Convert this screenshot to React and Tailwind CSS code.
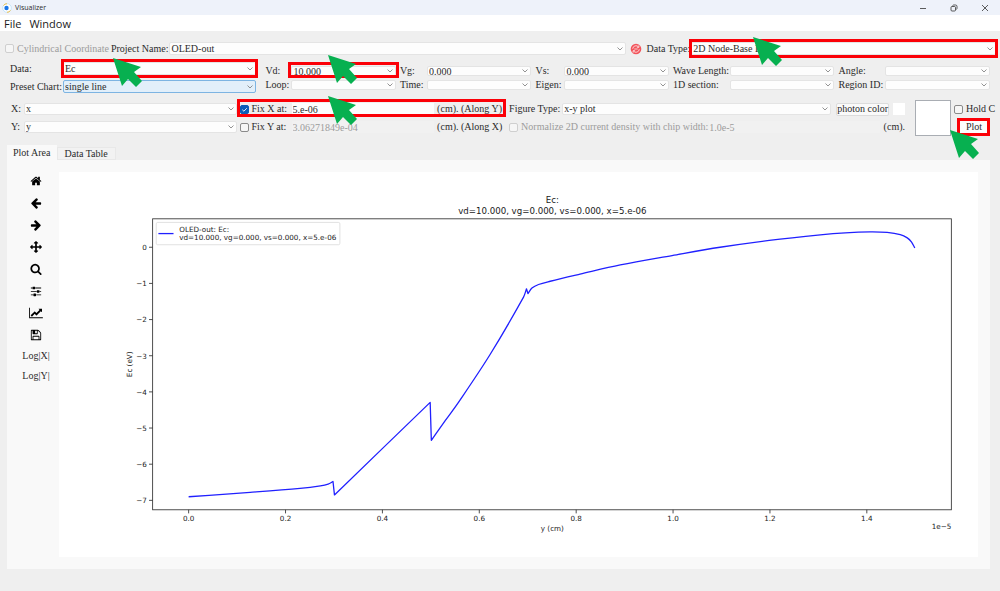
import clsx from "clsx";
import { useState } from "react";

const BIAS_FIELDS = [
  ["Vd:", "10.000"],
  ["Vg:", "0.000"],
  ["Vs:", "0.000"],
  ["Wave Length:", ""],
  ["Angle:", ""],
  ["Loop:", ""],
  ["Time:", ""],
  ["Eigen:", ""],
  ["1D section:", ""],
  ["Region ID:", ""],
];

// Font Awesome 4 glyphs used by the plot toolbar
const TOOLS = [
  {
    name: "Home",
    d: "M1472 992v480q0 26-19 45t-45 19h-384v-384h-256v384h-384q-26 0-45-19t-19-45v-480q0-1 .5-3t.5-3l575-474 575 474q1 2 1 6zm223-69l-62 74q-8 9-21 11h-3q-13 0-21-7l-692-577-692 577q-12 8-24 7-13-2-21-11l-62-74q-8-10-7-23.5t11-21.5l719-599q32-26 76-26t76 26l244 204v-195q0-14 9-23t23-9h192q14 0 23 9t9 23v408l219 182q10 8 11 21.5t-7 23.5z",
  },
  {
    name: "Back",
    d: "M1664 896v128q0 53-32.5 90.5t-84.5 37.5h-704l293 294q38 36 38 90t-38 90l-75 76q-37 37-90 37-52 0-91-37l-651-652q-37-37-37-90 0-52 37-91l651-650q38-38 91-38 52 0 90 38l75 74q38 38 38 91t-38 91l-293 293h704q52 0 84.5 37.5t32.5 90.5z",
  },
  {
    name: "Forward",
    flip: true,
    d: "M1664 896v128q0 53-32.5 90.5t-84.5 37.5h-704l293 294q38 36 38 90t-38 90l-75 76q-37 37-90 37-52 0-91-37l-651-652q-37-37-37-90 0-52 37-91l651-650q38-38 91-38 52 0 90 38l75 74q38 38 38 91t-38 91l-293 293h704q52 0 84.5 37.5t32.5 90.5z",
  },
  {
    name: "Pan",
    d: "M1792 896q0 26-19 45l-256 256q-19 19-45 19t-45-19-19-45v-128h-384v384h128q26 0 45 19t19 45-19 45l-256 256q-19 19-45 19t-45-19l-256-256q-19-19-19-45t19-45 45-19h128v-384h-384v128q0 26-19 45t-45 19-45-19l-256-256q-19-19-19-45t19-45l256-256q19-19 45-19t45 19 19 45v128h384v-384h-128q-26 0-45-19t-19-45 19-45l256-256q19-19 45-19t45 19l256 256q19 19 19 45t-19 45-45 19h-128v384h384v-128q0-26 19-45t45-19 45 19l256 256q19 19 19 45z",
  },
  {
    name: "Zoom",
    d: "M1216 832q0-185-131.5-316.5t-316.5-131.5-316.5 131.5-131.5 316.5 131.5 316.5 316.5 131.5 316.5-131.5 131.5-316.5zm512 832q0 52-38 90t-90 38q-54 0-90-38l-343-342q-179 124-399 124-143 0-273.5-55.5t-225-150-150-225-55.5-273.5 55.5-273.5 150-225 225-150 273.5-55.5 273.5 55.5 225 150 150 225 55.5 273.5q0 220-124 399l343 343q37 37 37 90z",
  },
  {
    name: "Configure subplots",
    d: "M480 1408v128h-352v-128h352zm352-128q26 0 45 19t19 45v256q0 26-19 45t-45 19h-256q-26 0-45-19t-19-45v-256q0-26 19-45t45-19h256zm160-384v128h-864v-128h864zm-640-512v128h-224v-128h224zm1312 1024v128h-736v-128h736zm-960-1152q26 0 45 19t19 45v256q0 26-19 45t-45 19h-256q-26 0-45-19t-19-45v-256q0-26 19-45t45-19h256zm640 512q26 0 45 19t19 45v256q0 26-19 45t-45 19h-256q-26 0-45-19t-19-45v-256q0-26 19-45t45-19h256zm320 128v128h-224v-128h224zm0-512v128h-864v-128h864z",
  },
  {
    name: "Edit axes",
    wide: true,
    d: "M2048 1536v128h-2048v-1536h128v1408h1920zm-128-1248v435q0 21-19.5 29.5t-35.5-7.5l-121-121-633 633q-10 10-23 10t-23-10l-233-233-416 416-192-192 585-585q10-10 23-10t23 10l233 233 464-464-121-121q-16-16-7.5-35.5t29.5-19.5h435q14 0 23 9t9 23z",
  },
  {
    name: "Save",
    d: "M512 1536h768v-384h-768v384zm896 0h128v-896q0-14-10-38.5t-20-34.5l-281-281q-10-10-34-20t-39-10v416q0 40-28 68t-68 28h-576q-40 0-68-28t-28-68v-416h-128v1280h128v-416q0-40 28-68t68-28h832q40 0 68 28t28 68v416zm-384-928v-320q0-13-9.5-22.5t-22.5-9.5h-192q-13 0-22.5 9.5t-9.5 22.5v320q0 13 9.5 22.5t22.5 9.5h192q13 0 22.5-9.5t9.5-22.5zm640 32v928q0 40-28 68t-68 28h-1344q-40 0-68-28t-28-68v-1344q0-40 28-68t68-28h928q40 0 88 20t76 48l280 280q28 28 48 76t20 88z",
  },
];

// Conduction band per layer: [y (1e-5 cm), Ec (eV)]
const LAYERS = [
  [[0, -6.9], [0.127, -6.78], [0.23, -6.67], [0.272, -6.6], [0.288, -6.55], [0.298, -6.48]],
  [[0.301, -6.85], [0.4986, -4.29]],
  [[0.501, -5.34], [0.53, -4.79], [0.557, -4.29], [0.6226, -2.96], [0.6913, -1.38], [0.6975, -1.15]],
  [
    [0.7004, -1.28], [0.7087, -1.13], [0.7223, -1.03], [0.7465, -0.94], [0.808, -0.745],
    [0.891, -0.49], [0.998, -0.23], [1.097, 0], [1.1985, 0.19], [1.304, 0.345], [1.3555, 0.4],
    [1.407, 0.425], [1.442, 0.41], [1.469, 0.35], [1.4835, 0.26], [1.492, 0.15], [1.499, -0.02],
  ],
];

const sx = (v) => 180 + v * 672.6;
const sy = (v) => 105.5 - v * 50.2;

// Smooth curve inside each layer, straight jump between layers
function bandPath() {
  let d = "";
  LAYERS.forEach((layer) => {
    const p = layer.map(([x, y]) => [sx(x), sy(y)]);
    d += `${d ? "L" : "M"}${p[0][0]} ${p[0][1]}`;
    for (let i = 0; i < p.length - 1; i++) {
      const a = p[i - 1] || p[i];
      const b = p[i];
      const c = p[i + 1];
      const e = p[i + 2] || c;
      // keep the control points inside the segment when spacing is uneven
      const k = (c[0] - b[0]) / 3;
      const m1 = (c[1] - a[1]) / (c[0] - a[0]);
      const m2 = (e[1] - b[1]) / (e[0] - b[0]);
      d += `C${b[0] + k} ${b[1] + m1 * k} ${c[0] - k} ${c[1] - m2 * k} ${c[0]} ${c[1]}`;
    }
  });
  return d;
}

function Highlight({ className }) {
  return <span className={clsx("pointer-events-none absolute border-[3px] border-[#fb0007]", className)} />;
}

function Pointer({ className }) {
  return (
    <svg viewBox="0 0 30 30" className={clsx("pointer-events-none absolute z-10 size-[30px]", className)}>
      <path d="M0 0L28 9L21 14L29 23L23 29L15 21L9 28Z" fill="#07b050" />
    </svg>
  );
}

function Select({ id, value, className, selectClass = "border-[#e4e4e4] bg-[#fdfdfd]", children }) {
  return (
    <div className={clsx("relative h-full min-w-0", className)}>
      <select
        id={id}
        defaultValue={value}
        className={clsx("block h-full w-full appearance-none rounded-[2px] border pl-px leading-none outline-none", selectClass)}
      >
        <option>{value}</option>
      </select>
      <svg viewBox="0 0 6 4" className="pointer-events-none absolute inset-y-0 right-[3px] my-auto h-1 w-1.5">
        <path d="M.5 .5L3 3L5.5 .5" fill="none" stroke="#777" strokeWidth=".8" />
      </svg>
      {children}
    </div>
  );
}

function Check({ label, className, ...props }) {
  return (
    <label className={clsx("flex items-center gap-[3px] whitespace-nowrap", className)}>
      <span className="relative size-[9px] shrink-0">
        <input
          type="checkbox"
          className="peer block size-[9px] appearance-none rounded-[2px] border border-[#8a8a8a] bg-[#f6f6f6] checked:border-[#0a5cb8] checked:bg-[#0a5cb8] disabled:border-[#cfcfcf]"
          {...props}
        />
        <svg viewBox="0 0 9 9" className="pointer-events-none absolute inset-0 hidden peer-checked:block">
          <path d="M2.3 4.7L3.9 6.2L6.8 3.2" fill="none" stroke="#fff" strokeWidth=".9" />
        </svg>
      </span>
      {label}
    </label>
  );
}

function Chart() {
  return (
    <svg viewBox="0 1 1276 535" className="block w-full bg-white" fontFamily="DejaVu Sans, sans-serif" fontSize="10" fill="#1a1a1a">
      <g fontSize="12" textAnchor="middle">
        <text x="685" y="44">Ec:</text>
        <text x="685" y="59">vd=10.000, vg=0.000, vs=0.000, x=5.e-06</text>
      </g>
      <rect x="130" y="66" width="1109" height="404" fill="none" stroke="#333" strokeWidth="1.2" />
      {[0, 2, 4, 6, 8, 10, 12, 14].map((t) => (
        <g key={t}>
          <path d={`M${sx(t / 10)} 470v5`} stroke="#333" strokeWidth="1.2" />
          <text x={sx(t / 10)} y="485" textAnchor="middle">{(t / 10).toFixed(1)}</text>
        </g>
      ))}
      {[0, 1, 2, 3, 4, 5, 6, 7].map((t) => (
        <g key={t}>
          <path d={`M130 ${sy(-t)}h-5`} stroke="#333" strokeWidth="1.2" />
          <text x="122" y={sy(-t) + 4} textAnchor="end">{t ? `−${t}` : "0"}</text>
        </g>
      ))}
      <text x="685" y="499" textAnchor="middle">y (cm)</text>
      <text x="1239" y="497" textAnchor="end">1e−5</text>
      <text transform="translate(102 268) rotate(-90)" textAnchor="middle">Ec (eV)</text>
      <path d={bandPath()} fill="none" stroke="#2020ff" strokeWidth="1.8" strokeLinejoin="round" />
      <rect x="135" y="71" width="255" height="31" rx="2" fill="#fff" stroke="#d5d5d5" />
      <path d="M138 86.5h21" stroke="#2020ff" strokeWidth="1.8" />
      <text x="167" y="84">OLED-out: Ec:</text>
      <text x="167" y="95">vd=10.000, vg=0.000, vs=0.000, x=5.e-06</text>
    </svg>
  );
}

export default function App() {
  const [tab, setTab] = useState("Plot Area");

  return (
    <div className="min-h-screen overflow-hidden bg-[#efefef] font-['Liberation_Serif',serif] text-[10px] leading-none text-[#2b2b2b]">
      {/* Title bar */}
      <header className="flex h-[15px] items-center bg-[#eef2fa] pr-[11px] pl-[2px] font-['Open_Sans',sans-serif] text-[7px]">
        <svg viewBox="0 0 10 10" className="mr-[3px] size-[10px]">
          <circle cx="5" cy="5" r="4.3" fill="#fff" stroke="#a8d8f5" strokeWidth=".6" />
          <path d="M1.5 2.5A4.3 4.3 0 0 1 5 .7M8.5 7.5A4.3 4.3 0 0 1 5 9.3" fill="none" stroke="#f2c14a" />
          <circle cx="4.5" cy="5" r="2.2" fill="#1976e8" />
        </svg>
        <span className="flex-1">Visualizer</span>
        <div className="flex gap-[23px]">
          <button aria-label="Minimize">
            <svg viewBox="0 0 8 8" className="size-2"><path d="M1 4.5h6" stroke="#333" strokeWidth=".8" /></svg>
          </button>
          <button aria-label="Restore">
            <svg viewBox="0 0 8 8" className="size-2" fill="none" stroke="#333" strokeWidth=".8">
              <rect x="1" y="2.5" width="4.5" height="4.5" rx="1" />
              <path d="M2.5 1.5Q3 1 4 1H5.5Q7 1 7 2.5V4Q7 5 6.5 5.500" />
            </svg>
          </button>
          <button aria-label="Close">
            <svg viewBox="0 0 8 8" className="size-2"><path d="M1 1L7 7M7 1L1 7" stroke="#333" strokeWidth=".8" /></svg>
          </button>
        </div>
      </header>

      <nav className="flex h-4 items-center gap-2 bg-white pl-1 font-['Open_Sans',sans-serif] text-[11px] text-[#1a1a1a]">
        <button>File</button>
        <button>Window</button>
      </nav>

      {/* Project row */}
      <div className="mt-[11px] flex h-[13px] items-center pr-1 pl-[5px]">
        <Check label="Cylindrical Coordinate" disabled className="mr-[2px] text-[#9c9c9c]" />
        <label htmlFor="project" className="mr-px whitespace-nowrap">Project Name:</label>
        <Select id="project" value="OLED-out" className="flex-3" />
        <button aria-label="Reload project" className="mx-1 size-3 shrink-0">
          <svg viewBox="0 0 12 12">
            <circle cx="6" cy="6" r="5.3" fill="#f2545b" />
            <path d="M2.7 5.8A3.3 3.3 0 0 1 8.6 4M9.3 6.2A3.3 3.3 0 0 1 3.4 8M8.9 2.3V4.3H6.9M3.1 9.7V7.7H5.1M4.3 6H7.7" fill="none" stroke="#fff" strokeWidth=".7" />
          </svg>
        </button>
        <label htmlFor="data-type" className="mr-px whitespace-nowrap">Data Type:</label>
        <Select id="data-type" value="2D Node-Base Data" className="flex-2">
          <Highlight className="-inset-x-[2px] -inset-y-[3px]" />
          <Pointer className="-top-[5px] left-[62px]" />
        </Select>
      </div>

      {/* Data and bias selection */}
      <div className="mt-[7px] flex gap-[9px] px-[10px]">
        <div className="grid min-w-0 flex-34 auto-rows-[13px] grid-cols-[51px_1fr] items-center gap-x-[2px] gap-y-[5px]">
          <label htmlFor="data">Data:</label>
          <Select id="data" value="Ec">
            <Highlight className="-inset-x-[2px] -inset-y-[3px]" />
            <Pointer className="-top-[4px] left-[50px]" />
          </Select>
          <label htmlFor="preset" className="whitespace-nowrap">Preset Chart:</label>
          <Select id="preset" value="single line" selectClass="border-[#7db4e2] bg-[#e2effa]" />
        </div>
        <div className="grid min-w-0 flex-100 auto-rows-[10px] grid-cols-[22px_1fr_23px_1fr_25px_1fr_53px_1fr_43px_1fr] items-center gap-1 pt-1">
          {BIAS_FIELDS.map(([label, value]) => (
            <div key={label} className="contents">
              <label htmlFor={label} className="whitespace-nowrap">{label}</label>
              <Select id={label} value={value}>
                {label === "Vd:" && (
                  <>
                    <Highlight className="-inset-x-[3px] -top-[4px] -bottom-[2px]" />
                    <Pointer className="-top-[11px] left-[37px]" />
                  </>
                )}
              </Select>
            </div>
          ))}
        </div>
      </div>

      {/* Axes and figure options */}
      <div className="mt-[7px] flex h-9 items-center gap-[3px] pr-[10px] pl-[11px]">
        <div className="grid min-w-0 flex-45 auto-rows-[12px] grid-cols-[12px_1fr] items-center gap-x-px gap-y-[6px]">
          <label htmlFor="x-axis">X:</label>
          <Select id="x-axis" value="x" />
          <label htmlFor="y-axis">Y:</label>
          <Select id="y-axis" value="y" />
        </div>

        <div className="relative grid min-w-0 flex-53 auto-rows-[12px] grid-cols-[49px_1fr_68px] items-center gap-x-[3px] gap-y-[6px]">
          <Check label="Fix X at:" defaultChecked />
          <input aria-label="Fix X value" defaultValue="5.e-06" className="h-full w-full min-w-0 bg-[#fdfdfd] pl-px" />
          <span className="whitespace-nowrap">(cm). (Along Y)</span>
          <Check label="Fix Y at:" />
          <input
            aria-label="Fix Y value"
            defaultValue="3.06271849e-04"
            disabled
            className="h-full w-full min-w-0 bg-[#f1f1f1] pl-px text-[#9c9c9c]"
          />
          <span className="whitespace-nowrap">(cm). (Along X)</span>
          <Highlight className="-top-[4px] -right-px -left-[3px] h-[18px]" />
          <Pointer className="-top-[7px] left-[88px]" />
        </div>

        <div className="grid min-w-0 flex-79 auto-rows-[12px] items-center gap-y-[6px] pl-px">
          <div className="flex h-full items-center">
            <label htmlFor="figure" className="mr-[2px] whitespace-nowrap">Figure Type:</label>
            <Select id="figure" value="x-y plot" className="flex-1" />
            <button className="mr-1 ml-[5px] h-[13px] rounded-[2px] border border-[#dcdcdc] bg-[#fafafa] whitespace-nowrap">
              photon color
            </button>
            <button aria-label="Photon color swatch" className="size-3 bg-white" />
          </div>
          <div className="flex h-full items-center">
            <Check label="Normalize 2D current density with chip width:" disabled className="text-[#9c9c9c]" />
            <input
              aria-label="Chip width"
              defaultValue="1.0e-5"
              disabled
              className="mr-1 ml-px h-full w-0 min-w-0 flex-1 bg-[#f1f1f1] text-[#9c9c9c]"
            />
            <span>(cm).</span>
          </div>
        </div>

        <div className="ml-[7px] size-9 shrink-0 border border-[#a9adb3] bg-white" />
        <div className="grid w-9 shrink-0 auto-rows-[12px] grid-cols-[36px] items-center gap-y-[6px]">
          <Check label="Hold C" />
          <button className="relative mr-[2px] ml-[5px] h-[14px] bg-[#fdfdfd] pl-px">
            Plot
            <Highlight className="-inset-x-[2px] -inset-y-[2px]" />
            <Pointer className="top-[10px] -left-[9px]" />
          </button>
        </div>
      </div>

      {/* Tabs */}
      <main className="mt-[9px] mr-[10px] ml-[7px]">
        <div role="tablist" className="flex h-[15px] items-end">
          {["Plot Area", "Data Table"].map((name) => (
            <button
              key={name}
              role="tab"
              aria-selected={tab === name}
              onClick={() => setTab(name)}
              className={clsx(
                tab === name ? "h-[15px] bg-[#f9f9f9] px-[6px]" : "h-[13px] border border-[#e8e8e8] bg-[#f2f2f2] px-[7px]"
              )}
            >
              {name}
            </button>
          ))}
        </div>
        <div className="flex items-start bg-[#f9f9f9] py-3 pr-3">
          <div className="flex w-[52px] shrink-0 flex-col items-center gap-[10px] pt-[3px] pl-[6px]">
            {TOOLS.map((tool) => (
              <button key={tool.name} aria-label={tool.name} className="flex h-3 items-center text-black">
                <svg
                  viewBox={tool.wide ? "0 0 2048 1792" : "0 0 1792 1792"}
                  fill="currentColor"
                  className={clsx("h-3", tool.wide ? "w-[14px]" : "w-3", tool.flip && "-scale-x-100")}
                >
                  <path d={tool.d} />
                </svg>
              </button>
            ))}
            <button className="whitespace-nowrap">Log|X|</button>
            <button className="whitespace-nowrap">Log|Y|</button>
          </div>
          <div className="min-w-0 flex-1">
            <Chart />
          </div>
        </div>
      </main>
    </div>
  );
}
